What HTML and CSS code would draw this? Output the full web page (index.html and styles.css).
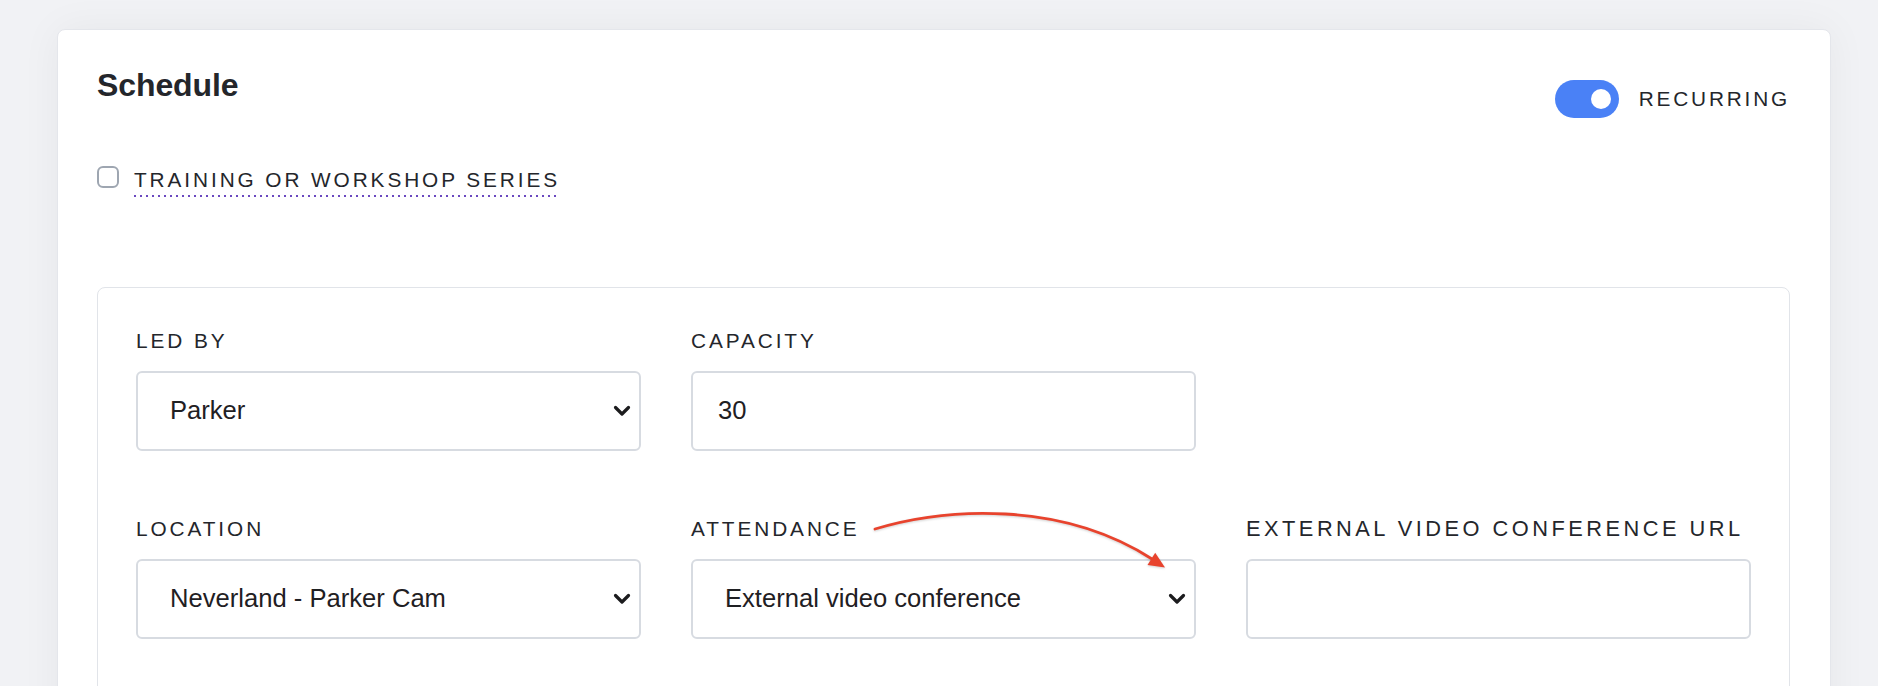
FILE: index.html
```html
<!DOCTYPE html>
<html lang="en">
<head>
<meta charset="utf-8">
<title>Schedule</title>
<link rel="stylesheet" href="styles.css">
</head>
<body>
  <section class="card">
    <header class="card-header">
      <h2 class="title">Schedule</h2>
      <label class="switch-row">
        <span class="switch"><span class="knob"></span></span>
        <span class="caps">Recurring</span>
      </label>
    </header>

    <label class="check-row">
      <span class="checkbox"></span>
      <span class="caps dotted">Training or workshop series</span>
    </label>

    <div class="panel">
      <div class="grid">
        <div class="field">
          <div class="caps label">Led by</div>
          <div class="select">
            <span class="value">Parker</span>
            <svg class="chev" width="18" height="12" viewBox="0 0 18 12"><path d="M2.5 2.5 L9 9 L15.5 2.5" fill="none" stroke="#1c1c1e" stroke-width="3.2" stroke-linecap="round" stroke-linejoin="round"/></svg>
          </div>
        </div>
        <div class="field">
          <div class="caps label">Capacity</div>
          <div class="input"><span class="value">30</span></div>
        </div>
        <div class="field"></div>

        <div class="field">
          <div class="caps label">Location</div>
          <div class="select">
            <span class="value">Neverland - Parker Cam</span>
            <svg class="chev" width="18" height="12" viewBox="0 0 18 12"><path d="M2.5 2.5 L9 9 L15.5 2.5" fill="none" stroke="#1c1c1e" stroke-width="3.2" stroke-linecap="round" stroke-linejoin="round"/></svg>
          </div>
        </div>
        <div class="field">
          <div class="caps label">Attendance</div>
          <div class="select">
            <span class="value">External video conference</span>
            <svg class="chev" width="18" height="12" viewBox="0 0 18 12"><path d="M2.5 2.5 L9 9 L15.5 2.5" fill="none" stroke="#1c1c1e" stroke-width="3.2" stroke-linecap="round" stroke-linejoin="round"/></svg>
          </div>
        </div>
        <div class="field">
          <div class="caps label label-wide">External video conference URL</div>
          <div class="input"></div>
        </div>
      </div>
    </div>
  </section>

  <svg class="annotation" width="1878" height="686" viewBox="0 0 1878 686">
    <g class="arrow">
      <path d="M875 529 C 945 508, 1060 500, 1152 559" fill="none" stroke="#e8432d" stroke-width="2.8" stroke-linecap="round"/>
      <polygon points="1165,567.5 1147.5,565 1155.2,552.8" fill="#e8432d"/>
    </g>
  </svg>
</body>
</html>
```

FILE: styles.css
```css
html, body {
  margin: 0;
  height: 100%;
  overflow: hidden;
}

body {
  background: #f1f2f5;
  padding: 29px 47px 0 57px;
  font-family: "Liberation Sans", Arial, Helvetica, sans-serif;
  color: #222327;
  box-sizing: border-box;
}

.card {
  background: #ffffff;
  border: 1px solid #e4e6eb;
  border-radius: 8px;
  box-shadow: 0 0 40px rgba(17, 24, 39, 0.05);
  padding: 36px 40px 80px 39px;
  min-height: 900px;
  box-sizing: border-box;
}

.card-header {
  display: flex;
  justify-content: space-between;
  align-items: flex-start;
}

.title {
  margin: 0;
  font-size: 32px;
  line-height: 1.2;
  font-weight: 700;
  color: #24262b;
  letter-spacing: -0.1px;
}

.caps {
  text-transform: uppercase;
  font-size: 20.8px;
  letter-spacing: 0.14em;
  color: #24262b;
}

.switch-row {
  display: flex;
  align-items: center;
  gap: 20px;
  margin-top: 14px;
  margin-right: 3px;
}

.switch-row .caps {
  letter-spacing: 0.135em;
  margin-right: -3px;
}

.switch {
  width: 64px;
  height: 38px;
  border-radius: 19px;
  background: #4a81f6;
  display: flex;
  align-items: center;
  justify-content: flex-end;
  padding-right: 8px;
  box-sizing: border-box;
}

.knob {
  width: 20px;
  height: 20px;
  border-radius: 50%;
  background: #ffffff;
}

.check-row {
  display: flex;
  align-items: flex-start;
  gap: 15px;
  margin-top: 48px;
}

.checkbox {
  width: 22px;
  height: 22px;
  border: 2px solid #9ea6b1;
  border-radius: 6px;
  box-sizing: border-box;
  background: #fff;
}

.dotted {
  line-height: 25px;
  padding-bottom: 5px;
  background-image: linear-gradient(to right, #6a48c0 2px, transparent 2px);
  background-size: 6px 2px;
  background-repeat: repeat-x;
  background-position: left bottom;
  margin-top: 0.5px;
}

.panel {
  margin-top: 90px;
  border: 1px solid #e1e4e9;
  border-radius: 8px;
  padding: 37px 38px 60px 38px;
}

.grid {
  display: grid;
  grid-template-columns: repeat(3, 1fr);
  column-gap: 50px;
  row-gap: 62px;
}

.label {
  line-height: 1.5;
  margin-bottom: 15px;
  white-space: nowrap;
}

.label-wide {
  font-size: 21.8px;
  letter-spacing: 0.16em;
  line-height: 31.2px;
}

.select,
.input {
  position: relative;
  height: 80px;
  border: 2px solid #d7dbe1;
  border-radius: 6px;
  box-sizing: border-box;
  display: flex;
  align-items: center;
  font-size: 25.6px;
  color: #1f2023;
  background: #fff;
}

.select {
  padding-left: 32px;
}

.input {
  padding-left: 25px;
}

.chev {
  position: absolute;
  right: 8px;
  top: 50%;
  margin-top: -6px;
}

.annotation {
  position: absolute;
  left: 0;
  top: 0;
  pointer-events: none;
  overflow: visible;
}

.arrow {
  filter: drop-shadow(0 1px 1px rgba(0, 0, 0, 0.18));
}
```
